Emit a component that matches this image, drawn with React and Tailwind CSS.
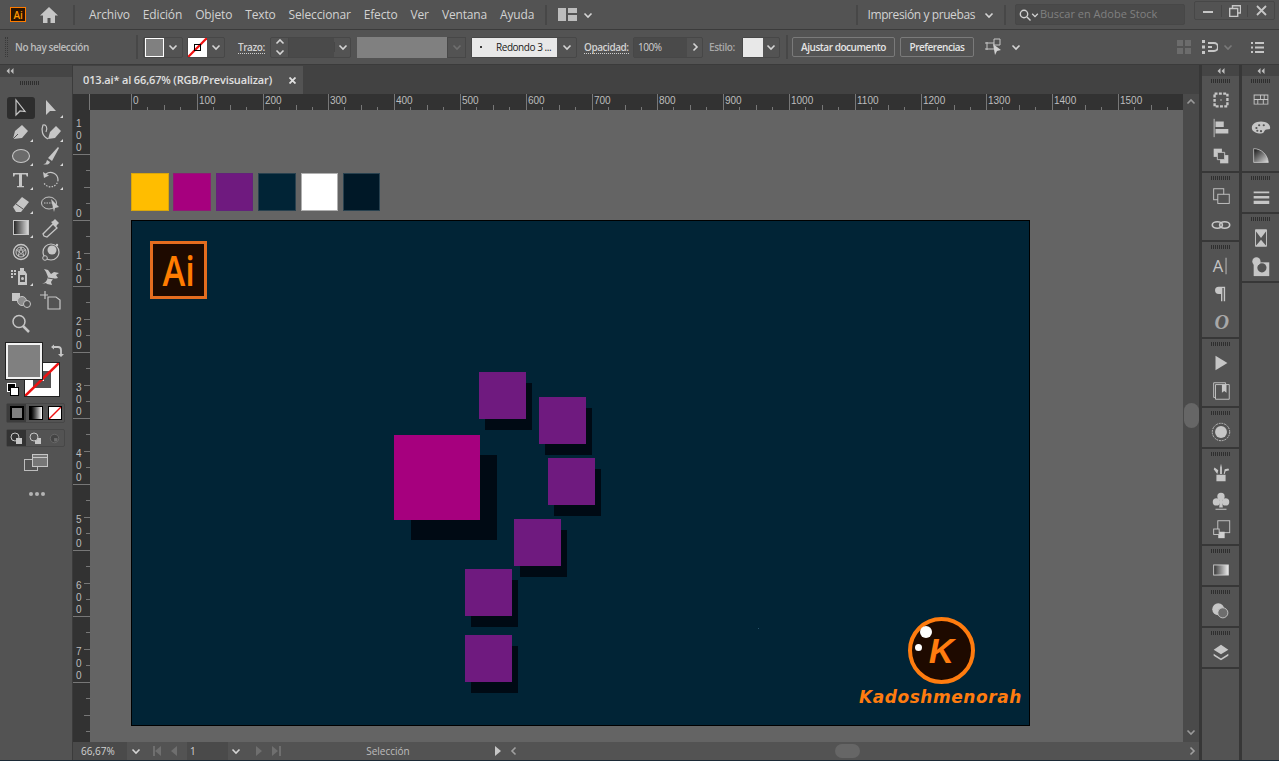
import React from 'react';

const MENU = ['Archivo', 'Edición', 'Objeto', 'Texto', 'Seleccionar', 'Efecto', 'Ver', 'Ventana', 'Ayuda'];
const SWATCHES = [
  'bg-[#ffbd00] border-[#d9a60c]',
  'bg-[#a6007e] border-[#8f1a74]',
  'bg-[#6f1a7f] border-[#63237a]',
  'bg-[#012436] border-[#28414f]',
  'bg-white border-[#b0b0b0]',
  'bg-[#001827] border-[#28414f]',
];
// x, y on the artboard
const SMALL_SQUARES = [[347, 151], [407, 176], [416, 237], [382, 298], [333, 348], [333, 414]];

const Chev = ({ dir = 'down', className = '', size = 10, color = '#d4d4d4' }) => {
  const d = { down: 'M1.5 3.5 5 7l3.5-3.5', up: 'M1.5 6.5 5 3l3.5 3.5', right: 'M3.5 1.5 7 5 3.5 8.5', left: 'M6.5 1.5 3 5l3.5 3.5' }[dir];
  return (
    <svg width={size} height={size} viewBox="0 0 10 10" className={className}>
      <path d={d} fill="none" stroke={color} strokeWidth="1.6" />
    </svg>
  );
};

const Grip = ({ className = '' }) => (
  <div className={`flex justify-center gap-px ${className}`}>
    {Array.from({ length: 10 }).map((_, i) => <span key={i} className="h-[4px] w-px bg-[#2e2e2e]" />)}
  </div>
);

const Collapse = () => (
  <svg width="8" height="6" viewBox="0 0 8 6"><path d="M3.5 0v6L.5 3zM7.5 0v6l-3-3z" fill="#bdbdbd" /></svg>
);

const ToolIcon = ({ children, corner }) => (
  <svg width="28" height="24" viewBox="0 0 28 24" fill="#c6c6c6" stroke="none">
    {children}
    {corner && <path d="M26 19v3h-3z" fill="#d8d8d8" />}
  </svg>
);

const line = { fill: 'none', stroke: '#c6c6c6', strokeWidth: 1.2 };

const TOOLS = [
  [<path d="M9 4v15l4-4 5 .5z" {...line} />, false, true],
  [<path d="M9 4v15l4-4h6z" />, true],
  [<><path d="M6 19l2-8 7-6 6 6-6 7z" /><path d="M6 19l5-5" stroke="#535353" /></>, true],
  [<><path d="M11 19l2-7 6-6 5 5-6 7z" /><path d="M11 19C5 16 4 10 6 5c3-1 5 3 3 7" {...line} /></>, true],
  [<ellipse cx="14" cy="12" rx="8.5" ry="6.5" fill="#6b6b6b" stroke="#c6c6c6" strokeWidth="1.1" />, true],
  [<><path d="M11 14 21 3l1 1-7 13z" /><path d="M6 20c3 0 3-1 4-4l3 2c-1 3-4 3-7 2z" /></>, true],
  [<path d="M6 5h15v3.5h-1.2L19 6.500h-4v11.500h2v1.300h-7V18h2V6.500H8l-.8 2H6z" />, true],
  [<><path d="M9 6a7.500 7.500 0 0 1 12 6" {...line} /><path d="M21 12a7.500 7.500 0 0 1-14 3" fill="none" stroke="#c6c6c6" strokeWidth="1.200" strokeDasharray="1.500 1.300" /><path d="M6 4l1 6 5-2.500z" /></>, true],
  [<><path d="M6 15 15 5l7 5-8 10H9z" /><path d="M9 12l7 5" stroke="#535353" /></>, true],
  [<><ellipse cx="12" cy="11" rx="7.500" ry="6" fill="none" stroke="#c6c6c6" /><path d="M7 11h8" stroke="#c6c6c6" strokeDasharray="1.500 1" /><path d="M14 7l8 8-4 1-1 4z" /></>, false],
  [<><defs><linearGradient id="tg"><stop offset="0" stopColor="#222" /><stop offset="1" stopColor="#ddd" /></linearGradient></defs><rect x="6.500" y="4.500" width="15" height="14" fill="url(#tg)" stroke="#c6c6c6" /></>, true],
  [<><path d="M7 20l-1-2L16 8l4 4-10 9z" fill="none" stroke="#c6c6c6" strokeWidth="1.300" /><path d="M16 5l2-2 4 4-2 2 -1 2-5-5z" /></>, false],
  [<><circle cx="14" cy="12" r="7.500" fill="none" stroke="#c6c6c6" strokeWidth="1.300" /><circle cx="14" cy="12" r="5" fill="none" stroke="#c6c6c6" /><path d="M14 7l3 9-7.500-6h9L11 16z" fill="none" stroke="#c6c6c6" strokeWidth=".8" /></>, false],
  [<><circle cx="15" cy="10" r="4.500" /><circle cx="14" cy="12" r="8" {...line} /><circle cx="8" cy="18" r="2.300" fill="#535353" stroke="#c6c6c6" /><circle cx="20" cy="5" r="1.200" /></>, false],
  [<><path d="M11 7h7l2 3v11H11z" /><rect x="13" y="11" width="5" height="7" fill="#535353" /><circle cx="15.500" cy="14.500" r="1.500" /><path d="M13 4h4v3h-4zM4 6h2v2H4zM7 6h2v2H7zM4 9h2v2H4zM7 9h2v2H7zM4 12h2v2H4z" /></>, true],
  [<><path d="M5 20c3-1 5-3 6-7l-2-5-2-3 4 1 3 4 3-2 5 1-3 2 2 3c-3 1-4 0-5 1l-2 3 1 3-5-1-1-1z" /><path d="M11 14l6 1" stroke="#535353" /></>, false],
  [<><rect x="5" y="5" width="8" height="8" /><circle cx="15" cy="13" r="4.500" fill="#8c8c8c" stroke="#c6c6c6" /><circle cx="20" cy="16" r="3.500" fill="#535353" stroke="#c6c6c6" /></>, false],
  [<><path d="M11 9h8l4 3v9H11z" {...line} /><path d="M3 7h8M8 3v8" {...line} /></>, false],
  [<><circle cx="12" cy="9.500" r="6" fill="none" stroke="#c6c6c6" strokeWidth="1.500" /><path d="M16 14l6 6" stroke="#c6c6c6" strokeWidth="2.500" /></>, false],
];

const DOCK_ICONS = {
  artboard: <><path d="M5 5h14v14H5z" fill="none" stroke="#c6c6c6" strokeWidth="2.600" strokeDasharray="3.200 1.500" /><circle cx="12" cy="12" r=".8" /></>,
  align: <><path d="M4.500 2v20" stroke="#c6c6c6" strokeWidth="1" /><path d="M6 5h9v6H6zM6 13h14v5H6z" /></>,
  pathfinder: <><path d="M4 4h9v9H4z" /><path d="M11 11h9v9h-9z" /><path d="M8 8h8v8H8z" fill="#535353" stroke="#c6c6c6" /></>,
  transform: <><rect x="4" y="3" width="11" height="12" fill="none" stroke="#c6c6c6" /><rect x="8.500" y="9" width="12.500" height="10" fill="#535353" stroke="#c6c6c6" /></>,
  link: <><ellipse cx="8" cy="12" rx="5.500" ry="3.500" fill="none" stroke="#c6c6c6" strokeWidth="1.800" /><ellipse cx="16" cy="12" rx="5.500" ry="3.500" fill="none" stroke="#c6c6c6" strokeWidth="1.800" /></>,
  char: <><text x="3" y="18" fontSize="18" fontFamily="'Open Sans',sans-serif">A</text><path d="M17.500 3v18" stroke="#c6c6c6" /></>,
  para: <><path d="M14 4H9.500a4 4 0 0 0 0 8H12v8h1.500V5.500H15V20h1.500V4z" /></>,
  opentype: <text x="5" y="20" fontSize="22" fontStyle="italic" fontWeight="700" fontFamily="'Liberation Serif',serif" fill="#a8a8a8">O</text>,
  play: <path d="M6 4l13 8-13 8z" />,
  book: <><path d="M4 3h13v16H4z" fill="none" stroke="#c6c6c6" /><path d="M6 5h15v16H6z" fill="#535353" stroke="#c6c6c6" /><path d="M13 5h5v9l-2.500-2-2.500 2z" /></>,
  glow: <><circle cx="12" cy="12" r="6.500" /><circle cx="12" cy="12" r="9.500" fill="none" stroke="#c6c6c6" strokeWidth="1" strokeDasharray="2 1" /></>,
  brushes: <path d="M7 14h10v7H7zM8 13 4 8l1-2 4 3zM11 13V6l1-4 1 4v7zM15 13l1-5 4-1 1 2-4 1-1 3z" />,
  club: <><circle cx="12" cy="7" r="4" /><circle cx="7" cy="13" r="4" /><circle cx="17" cy="13" r="4" /><path d="M11 10h2l1 9h-4zM6 20.500h12v1H6z" /></>,
  symbols: <><rect x="8.500" y="3" width="13" height="13" fill="none" stroke="#c6c6c6" /><path d="M9 15h7v7H9z" fill="#d0d0d0" /><rect x="4" y="12" width="6" height="6" fill="#535353" stroke="#c6c6c6" /></>,
  gradient: <><defs><linearGradient id="dg"><stop offset="0" stopColor="#333" /><stop offset="1" stopColor="#eee" /></linearGradient></defs><rect x="4" y="6.500" width="16" height="11" fill="url(#dg)" stroke="#d0d0d0" /></>,
  transparency: <><circle cx="9" cy="10" r="6.500" /><circle cx="14" cy="14" r="5.500" fill="#6e6e6e" stroke="#c6c6c6" /></>,
  layers: <><path d="M12 4l8 5.500-8 5-8-5z" /><path d="M4 14l8 5 8-5 0 2-8 5-8-5z" /></>,
  swatches: <path d="M4 6h16v11H4zM5 7v4h6V7zM12 7v4h3V7zM16 7v4h3V7zM5 12v4h3v-4zM9 12v4h5v-4zM15 12v4h4v-4z" fillRule="evenodd" />,
  palette: <><path d="M12 5c6 0 10 3 10 7 0 2-3 1-5 2-2 1-1 4-5 4-5 0-10-2-10-6 0-4 4-7 10-7z" /><circle cx="7" cy="12" r="1.200" fill="#535353" /><circle cx="10" cy="9" r="1.200" fill="#535353" /><circle cx="15" cy="9" r="1.200" fill="#535353" /><circle cx="8" cy="15" r="1.200" fill="#535353" /><circle cx="12" cy="15.500" r="1.200" fill="#535353" /></>,
  gradientSwatch: <><defs><linearGradient id="wg" x1="0" y1="0" x2="1" y2="1"><stop offset="0" stopColor="#111" /><stop offset="1" stopColor="#ddd" /></linearGradient></defs><path d="M4 4c8 0 15 6 16 15H4z" fill="url(#wg)" stroke="#d0d0d0" strokeWidth=".8" /></>,
  strokes: <path d="M4 6h17v2H4zM4 11h17v2.500H4zM4 16h17v3.500H4z" />,
  hourglass: <><path d="M6 3h12v1L12 12 6 4zM6 21l6-7 6 7z" /><path d="M6 3v18h12V3z" fill="none" stroke="#c6c6c6" /></>,
  mask: <><path d="M4 8h17v15H4z" fill="#c6c6c6" /><circle cx="13" cy="14" r="5" fill="#535353" /><circle cx="7" cy="7" r="4.500" /></>,
};

const DockIcon = ({ name }) => (
  <div className="flex h-[28px] items-center justify-center">
    <svg width="22" height="22" viewBox="0 0 24 24" fill="#c6c6c6" className="overflow-visible">{DOCK_ICONS[name]}</svg>
  </div>
);

const DockGroup = ({ icons }) => (
  <div className="border-b-2 border-[#373737] pb-[1px]">
    <Grip className="h-[10px] items-center" />
    {icons.map((n) => <DockIcon key={n} name={n} />)}
  </div>
);

const DOCK_A = [
  ['artboard', 'align', 'pathfinder'],
  ['transform', 'link'],
  ['char', 'para', 'opentype'],
  ['play', 'book'],
  ['glow'],
  ['brushes', 'club', 'symbols'],
  ['gradient'],
  ['transparency'],
  ['layers'],
];
const DOCK_B = [['swatches', 'palette', 'gradientSwatch'], ['strokes'], ['hourglass', 'mask']];

const Dock = ({ groups, className = '' }) => (
  <div className={`flex flex-col ${className}`}>
    <div className="flex h-[11px] items-center justify-center bg-[#454545]"><Collapse /></div>
    {groups.map((g) => <DockGroup key={g[0]} icons={g} />)}
    <div className="flex-1" />
  </div>
);

const Slash = () => (
  <svg className="h-full w-full" viewBox="0 0 20 20" preserveAspectRatio="none">
    <path d="M0 20 20 0" stroke="#ee1111" strokeWidth="2.400" />
  </svg>
);

const HRuler = () => {
  const marks = Array.from({ length: 17 }, (_, i) => i);
  return (
    <svg width="1093" height="16" className="block">
      <path d="M-.5 0v16" stroke="#888" />
      {marks.map((i) => {
        const x = Math.round(41 + 65.8 * i);
        return (
          <g key={i}>
            <path d={`M${x + .5} 0v16`} stroke="#777" />
            <path d={`M${x + 16.500} 13v3M${x + 33.500} 11v5M${x + 49.500} 13v3`} stroke="#777" />
            {i < 16 && <text x={x + 2} y="10" fontSize="10" fill="#bdbdbd" fontFamily="'Liberation Sans',sans-serif">{i * 100}</text>}
          </g>
        );
      })}
    </svg>
  );
};

const VRuler = () => {
  const marks = Array.from({ length: 9 }, (_, i) => i - 1);
  return (
    <svg width="17" height="632" className="block">
      {marks.map((i) => {
        const y = 110 + 66 * i;
        const digits = String(Math.abs(i) * 100).split('');
        return (
          <g key={i}>
            <path d={`M0 ${y + .5}h17`} stroke="#777" />
            <path d={`M13 ${y + 16.500}h4M11 ${y + 33.500}h6M13 ${y + 49.500}h4`} stroke="#777" />
            {digits.map((c, k) => (
              <text key={k} x="3" y={y - 3 - (digits.length - 1 - k) * 12} fontSize="10" fill="#bdbdbd" fontFamily="'Liberation Sans',sans-serif">{c}</text>
            ))}
          </g>
        );
      })}
    </svg>
  );
};

const Sep = ({ className = '' }) => <div className={`w-[2px] bg-[#474747] ${className}`} />;

const Box = ({ className = '', children }) => (
  <div className={`flex h-[21px] items-center rounded-[2px] border border-[#474747] ${className}`}>{children}</div>
);

const MenuBar = () => (
  <div className="flex h-[30px] shrink-0 items-center border-b border-[#3b3b3b] bg-[#535353] text-[12px] tracking-[-.15px] text-[#d2d2d2]">
    <div className="ml-[10px] flex h-[15px] w-[16px] items-center justify-center border border-[#ff7c00] bg-[#2b1400] text-[10px] font-semibold leading-none text-[#ff9a00]">Ai</div>
    <svg width="20" height="18" viewBox="0 0 20 18" className="ml-[13px]" fill="#c6c6c6"><path d="M10 1 1 9.500h3V17h4.500v-5h3v5H16V9.500h3z" /></svg>
    <Sep className="ml-[14px] h-[20px]" />
    <div className="ml-[14px] flex gap-[13px]">
      {MENU.map((m) => <span key={m}>{m}</span>)}
    </div>
    <Sep className="ml-[11px] h-[20px]" />
    <svg width="19" height="13" viewBox="0 0 19 13" className="ml-[11px]" fill="#bdbdbd"><path d="M0 0h8v13H0zM10 0h9v5h-9zM10 7h9v6h-9z" /></svg>
    <Chev className="ml-[6px]" />
    <div className="flex-1" />
    <Sep className="h-[20px]" />
    <span className="ml-[10px] tracking-[-.4px]">Impresión y pruebas</span>
    <Chev className="ml-[9px]" />
    <Sep className="ml-[10px] h-[20px]" />
    <div className="ml-[9px] flex h-[21px] w-[170px] items-center rounded-[2px] border border-[#474747] bg-[#4a4a4a] pl-[3px] text-[11px] tracking-normal text-[#808080]">
      <svg width="12" height="12" viewBox="0 0 12 12" fill="none" stroke="#d0d0d0" strokeWidth="1.400"><circle cx="5" cy="5" r="3.700" /><path d="M8 8l3.500 3.500" /></svg>
      <Chev size={8} />
      <span className="ml-[1px]">Buscar en Adobe Stock</span>
    </div>
    <div className="mb-[8px] ml-[9px] mr-[4px] flex h-[19px] w-[81px] items-center rounded-[2px] border border-[#474747]">
      <div className="flex flex-1 justify-center"><span className="mt-[3px] h-[2px] w-[10px] bg-[#c6c6c6]" /></div>
      <div className="flex flex-1 justify-center border-x border-[#474747]">
        <svg width="12" height="12" viewBox="0 0 12 12" fill="none" stroke="#c6c6c6" strokeWidth="1.400"><path d="M3.500 3V.700h8V8H9M.700 3.500h8v8h-8z" /></svg>
      </div>
      <div className="flex flex-1 justify-center">
        <svg width="11" height="11" viewBox="0 0 11 11" stroke="#c6c6c6" strokeWidth="1.800"><path d="M1 1l9 9M10 1l-9 9" /></svg>
      </div>
    </div>
  </div>
);

const ControlBar = () => (
  <div className="flex h-[35px] shrink-0 items-center border-b border-[#3b3b3b] bg-[#535353] text-[10px] tracking-[-.45px] text-[#d2d2d2]">
    <div className="ml-[5px] h-[20px] w-[3px] border-x border-dotted border-[#393939]" />
    <span className="ml-[7px] w-[74px] whitespace-nowrap font-semibold text-[#bcbcbc]">No hay selección</span>
    <Sep className="ml-[47px] h-[24px]" />
    <Box className="ml-[5px] w-[40px]">
      <span className="ml-px h-[19px] w-[19px] border border-white bg-[#808080]" />
      <Chev className="mx-auto" />
    </Box>
    <Box className="ml-[4px] w-[38px]">
      <span className="relative h-[19px] w-[19px] bg-white">
        <Slash />
        <span className="absolute left-[6px] top-[6px] h-[7px] w-[7px] border border-black" />
      </span>
      <Chev className="mx-auto" />
    </Box>
    <span className="ml-[13px] w-[27px] border-b border-dotted border-[#cfcfcf] font-semibold leading-[12px]">Trazo:</span>
    <Box className="ml-[5px] w-[81px]">
      <div className="flex w-[18px] flex-col items-center border-r border-[#474747]"><Chev dir="up" /><Chev /></div>
      <div className="h-full w-[45px] bg-[#4a4a4a]" />
      <div className="flex flex-1 justify-center border-l border-[#474747]"><Chev /></div>
    </Box>
    <div className="ml-[6px] h-[21px] w-[90px] bg-[#808080]" />
    <Box className="w-[19px] justify-center rounded-none"><Chev color="#6f6f6f" /></Box>
    <Box className="ml-[5px] w-[106px]">
      <div className="flex h-full w-[85px] items-center bg-[#e8e8e8] text-[#1a1a1a]">
        <span className="ml-[8px] h-[2px] w-[2px] rounded-full bg-black" />
        <span className="ml-[14px] whitespace-nowrap">Redondo 3 ...</span>
      </div>
      <Chev className="mx-auto" />
    </Box>
    <span className="ml-[7px] w-[45px] whitespace-nowrap border-b border-dotted border-[#cfcfcf] font-semibold leading-[12px]">Opacidad:</span>
    <Box className="ml-[4px] w-[70px]">
      <div className="flex h-full w-[53px] items-center bg-[#4a4a4a] pl-[4px]">100%</div>
      <Chev dir="right" className="mx-auto" />
    </Box>
    <span className="ml-[6px] w-[27px] font-semibold text-[#a8a8a8]">Estilo:</span>
    <Box className="ml-[6px] w-[38px]">
      <span className="h-[19px] w-[20px] bg-[#e8e8e8]" />
      <Chev className="mx-auto" />
    </Box>
    <Sep className="ml-[6px] h-[24px]" />
    <button className="ml-[4px] h-[20px] w-[103px] rounded-[2px] border border-[#7a7a7a] font-semibold text-[#e4e4e4]">Ajustar documento</button>
    <button className="ml-[5px] h-[20px] w-[74px] rounded-[2px] border border-[#7a7a7a] font-semibold text-[#e4e4e4]">Preferencias</button>
    <svg width="20" height="20" viewBox="0 0 20 20" className="ml-[10px]" fill="none" stroke="#c6c6c6"><path d="M1 6h9M1 12h9M3 5v8M10 2h6v6h-6z" /><path d="M9 7l8 6-4 1-2 4z" fill="#d0d0d0" stroke="none" /></svg>
    <Chev className="ml-[7px]" />
    <div className="flex-1" />
    <svg width="14" height="14" viewBox="0 0 14 14" fill="#6c6c6c"><path d="M0 0h6v6H0zM8 0h6v6H8zM0 8h6v6H0zM8 8h6v6H8z" /></svg>
    <svg width="16" height="14" viewBox="0 0 16 14" className="ml-[11px]" fill="#c6c6c6"><path d="M0 0h3v3H0zM0 5.500h3v3H0zM0 11h3v3H0zM6 2h6a5 5 0 0 1 0 10H6v-2h6a3 3 0 0 0 0-6H6zM6 6h4v2H6z" /></svg>
    <Chev className="ml-[5px]" color="#7a7a7a" />
    <svg width="13" height="11" viewBox="0 0 13 11" className="ml-[18px] mr-[15px]" fill="#c6c6c6"><path d="M0 0h2v2H0zM4 0h9v2H4zM0 4.500h2v2H0zM4 4.500h9v2H4zM0 9h2v2H0zM4 9h9v2H4z" /></svg>
  </div>
);

const Toolbar = () => (
  <div className="flex w-[72px] shrink-0 flex-col bg-[#535353]">
    <div className="flex h-[12px] items-center bg-[#454545] pl-[6px]"><Collapse /></div>
    <Grip className="mt-[3px] h-[6px] w-[58px] items-center" />
    <div className="ml-[6px] mt-[10px] grid w-[60px] grid-cols-2">
      {TOOLS.map(([icon, corner, active], i) => (
        <div key={i} className="flex h-[24px] w-[30px] items-center justify-center">
          <div className={`flex h-[22px] w-[28px] items-center justify-center rounded-[3px] ${active ? 'bg-[#2d2d2d]' : ''}`}>
            <ToolIcon corner={corner}>{icon}</ToolIcon>
          </div>
        </div>
      ))}
    </div>
    <div className="relative ml-[6px] mt-[7px] h-[55px] w-[54px]">
      <div className="absolute left-[18px] top-[19px] h-[35px] w-[36px] border border-[#222] bg-white">
        <div className="absolute inset-[8px] border-[7px] border-[#535353] bg-transparent" />
        <svg className="absolute inset-0 h-full w-full" viewBox="0 0 20 20" preserveAspectRatio="none"><path d="M0 20 20 0" stroke="#ee1111" strokeWidth="1.500" /></svg>
      </div>
      <div className="absolute left-0 top-0 h-[36px] w-[36px] border-2 border-[#f2f2f2] bg-[#808080] outline outline-1 outline-[#222]" />
      <svg width="14" height="14" viewBox="0 0 14 14" className="absolute left-[44px] top-[1px]" fill="none" stroke="#c6c6c6" strokeWidth="1.800"><path d="M3 3h5a3 3 0 0 1 3 3v6" /><path d="M1 3l3-2.500v5zM8 10l3 3 3-3" fill="#c6c6c6" stroke="none" /></svg>
      <div className="absolute left-[1px] top-[40px] h-[9px] w-[9px] border border-white bg-black" />
      <div className="absolute left-[4px] top-[44px] h-[9px] w-[9px] border border-black bg-white" />
    </div>
    <div className="ml-[6px] mt-[5px] flex h-[20px] w-[59px] items-center rounded-[2px] border border-[#474747]">
      <div className="flex h-full w-[19px] items-center justify-center bg-[#3c3c3c]"><span className="h-[14px] w-[14px] border-2 border-black bg-[#808080]" /></div>
      <div className="flex h-full flex-1 items-center justify-center"><span className="h-[14px] w-[14px] border border-black bg-gradient-to-r from-black to-white" /></div>
      <div className="flex h-full flex-1 items-center justify-center"><span className="h-[14px] w-[14px] border border-black bg-white"><Slash /></span></div>
    </div>
    <div className="ml-[6px] mt-[6px] flex h-[18px] w-[59px] items-center rounded-[2px] border border-[#474747]">
      <div className="flex h-full w-[19px] items-center justify-center bg-[#333]">
        <svg width="13" height="13" viewBox="0 0 13 13"><circle cx="5" cy="5" r="4" fill="#333" stroke="#c6c6c6" /><rect x="6" y="6" width="6" height="6" fill="#c6c6c6" /></svg>
      </div>
      <div className="flex flex-1 justify-center">
        <svg width="13" height="13" viewBox="0 0 13 13"><rect x="6" y="6" width="6" height="6" fill="#c6c6c6" /><circle cx="5" cy="5" r="4" fill="#535353" stroke="#c6c6c6" /></svg>
      </div>
      <div className="flex flex-1 justify-center">
        <svg width="11" height="11" viewBox="0 0 13 13"><circle cx="6.500" cy="6.500" r="5" fill="#444" stroke="#6c6c6c" /><path d="M6 6h4v4H6z" fill="#6c6c6c" /></svg>
      </div>
    </div>
    <svg width="24" height="17" viewBox="0 0 24 17" className="ml-[24px] mt-[7px]">
      <rect x=".5" y="5.500" width="13" height="11" fill="#535353" stroke="#bdbdbd" />
      <rect x="8.500" y=".5" width="15" height="12" fill="#777" stroke="#c6c6c6" />
      <path d="M9 3.500h14" stroke="#c6c6c6" />
    </svg>
    <div className="ml-[29px] mt-[21px] flex gap-[2px]">
      {[0, 1, 2].map((i) => <span key={i} className="h-[4px] w-[4px] rounded-full bg-[#b4b4b4]" />)}
    </div>
  </div>
);

const Artboard = () => (
  <div className="relative mt-[9px] h-[506px] w-[899px] border border-black bg-[#012436]">
    <div className="absolute left-[18px] top-[20px] flex h-[58px] w-[57px] items-center justify-center border-[3px] border-[#e56d1f] bg-[#1e0a00] text-[42px] font-semibold leading-none text-[#ff7c00]">
      <span className="scale-x-[.82]">Ai</span>
    </div>
    <div className="absolute left-[262px] top-[214px] h-[85px] w-[86px] bg-[#a6007e] shadow-[17px_20px_0_#000a14]" />
    {SMALL_SQUARES.map(([x, y]) => (
      <div key={x + '-' + y} className="absolute h-[47px] w-[47px] bg-[#6f1a7f] shadow-[6px_11px_0_#000a14]" style={{ left: x, top: y }} />
    ))}
    <div className="absolute left-[626px] top-[407px] h-px w-px bg-[#28536a]" />
    <div className="absolute left-[776px] top-[396px] flex h-[67px] w-[67px] items-center justify-center rounded-full border-[4px] border-[#ff7c0f] bg-[#1e0a00] font-['Liberation_Sans',sans-serif] text-[35px] font-bold italic leading-none text-[#ff7c0f]">
      <span>K</span>
    </div>
    <div className="absolute left-[788px] top-[405px] h-[12px] w-[12px] rounded-full bg-white" />
    <div className="absolute left-[783px] top-[423px] h-[7px] w-[7px] rounded-full bg-white" />
    <div className="absolute left-[727px] top-[464px] whitespace-nowrap font-['DejaVu_Sans',sans-serif] text-[17px] font-bold italic tracking-[.55px] text-[#ff7c0f]">Kadoshmenorah</div>
  </div>
);

const StatusBar = () => (
  <div className="flex h-[18px] shrink-0 items-center bg-[#535353] text-[10px] text-[#d2d2d2]">
    <div className="flex h-full w-[54px] items-center bg-[#4a4a4a] pl-[8px]">66,67%</div>
    <Chev className="ml-[4px]" />
    <svg width="34" height="10" viewBox="0 0 34 10" className="ml-[12px]" fill="#6f6f6f"><path d="M8 0v10L2 5zM0 0h2v10H0zM24 0v10l-6-5z" /></svg>
    <div className="flex h-full w-[41px] items-center bg-[#4a4a4a] pl-[3px]">1</div>
    <Chev className="ml-[3px]" />
    <svg width="26" height="10" viewBox="0 0 26 10" className="ml-[14px]" fill="#6f6f6f"><path d="M1 0v10l6-5zM17 0v10l6-5zM24 0h2v10h-2z" /></svg>
    <span className="w-[214px] text-center text-[#bdbdbd]">Selección</span>
    <svg width="6" height="10" viewBox="0 0 6 10" fill="#c6c6c6"><path d="M0 0v10l6-5z" /></svg>
    <Chev dir="left" className="ml-[8px]" color="#a0a0a0" />
    <div className="ml-[316px] h-[14px] w-[25px] rounded-full bg-[#666]" />
    <div className="flex-1" />
    <Chev dir="right" className="mr-[2px]" color="#a0a0a0" />
  </div>
);

export default function App() {
  return (
    <div className="flex h-screen w-screen flex-col overflow-hidden bg-[#535353] font-['Open_Sans',sans-serif]">
      <MenuBar />
      <ControlBar />
      <div className="flex min-h-0 flex-1">
        <Toolbar />
        <div className="w-px bg-[#3b3b3b]" />
        <div className="flex w-[1126px] shrink-0 flex-col">
          <div className="flex h-[29px] shrink-0 items-end bg-[#424242]">
            <div className="flex h-[28px] w-[230px] items-center bg-[#535353] pl-[10px] text-[11px] font-semibold tracking-[-.15px] text-[#e0e0e0]">
              <span className="whitespace-nowrap">013.ai* al 66,67% (RGB/Previsualizar)</span>
              <svg width="7" height="7" viewBox="0 0 7 7" className="ml-[17px]" stroke="#e0e0e0" strokeWidth="1.800"><path d="M.5.5l6 6M6.500.5l-6 6" /></svg>
            </div>
          </div>
          <div className="flex h-[16px] shrink-0 bg-[#323232]">
            <div className="flex w-[17px] items-end"><div className="h-[16px] w-[17px] border-r border-[#777]" /></div>
            <HRuler />
            <div className="flex w-[16px] items-center justify-center bg-[#4a4a4a]"><Chev dir="up" color="#999" /></div>
          </div>
          <div className="flex min-h-0 flex-1">
            <div className="w-[17px] shrink-0 overflow-hidden bg-[#323232]"><VRuler /></div>
            <div className="w-[1093px] shrink-0 overflow-hidden bg-[#646464] pl-[41px] pt-[63px]">
              <div className="flex gap-[4.900px]">
                {SWATCHES.map((c) => <div key={c} className={`h-[38px] w-[37.500px] border ${c}`} />)}
              </div>
              <Artboard />
            </div>
            <div className="flex w-[16px] shrink-0 flex-col items-center bg-[#4a4a4a]">
              <div className="mt-[293px] h-[25px] w-[15px] rounded-full bg-[#666]" />
              <div className="flex-1" />
              <Chev color="#999" className="mb-[5px]" />
            </div>
          </div>
          <StatusBar />
        </div>
        <div className="w-[3px] bg-[#373737]" />
        <Dock groups={DOCK_A} className="w-[37px]" />
        <div className="w-[3px] bg-[#373737]" />
        <Dock groups={DOCK_B} className="flex-1" />
      </div>
      <div className="h-px shrink-0 bg-[#1c2a36]" />
    </div>
  );
}
